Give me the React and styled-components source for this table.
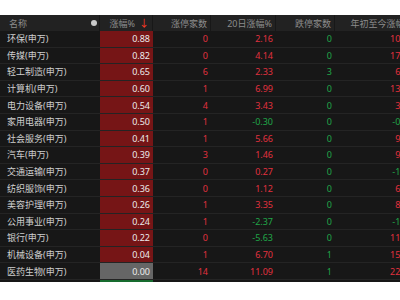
import React from 'react';
import styled, { createGlobalStyle } from 'styled-components';

const GlobalStyle = createGlobalStyle`
  html, body {
    margin: 0;
    padding: 0;
    background: #ffffff;
  }
`;

const COLUMNS = '88px 12px 53px 58px 65px 59px 81px';

const Page = styled.div`
  width: 400px;
  height: 300px;
  padding-top: 15px;
  box-sizing: border-box;
  background: #ffffff;
  font-family: 'Noto Sans', 'Noto Sans CJK SC', sans-serif;
  font-size: 9px;
`;

const Board = styled.div`
  width: 400px;
  height: 267px;
  overflow: hidden;
  background: #171717;
`;

const HeaderRow = styled.div`
  display: grid;
  grid-template-columns: ${COLUMNS};
  height: 16px;
  background: #222222;
`;

const HeadCell = styled.div`
  display: flex;
  align-items: center;
  justify-content: ${(p) => (p.$left ? 'flex-start' : p.$center ? 'center' : 'flex-end')};
  padding: ${(p) => (p.$left ? '0 0 0 9px' : p.$center ? '0' : '0 3px 0 0')};
  border-right: ${(p) => (p.$noLine ? 'none' : '1px solid #181818')};
  color: #8c8c8c;
  white-space: nowrap;
  gap: 4px;
`;

const Dot = styled.span`
  width: 6px;
  height: 6px;
  border-radius: 50%;
  background: #c9c9c9;
`;

const Arrow = styled.span`
  color: #ff3b24;
  font-size: 10px;
  line-height: 1;
`;

const Row = styled.div`
  display: grid;
  grid-template-columns: ${COLUMNS};
  height: 16.6px;
`;

const Cell = styled.div`
  display: flex;
  align-items: center;
  justify-content: ${(p) => (p.$left ? 'flex-start' : 'flex-end')};
  padding: ${(p) => (p.$left ? '0 0 0 7px' : '0 3px 0 0')};
  border-bottom: 1px solid #242424;
  box-sizing: border-box;
  white-space: nowrap;
  color: ${(p) => p.$color || '#cfcfcf'};
  background: ${(p) => p.$bg || 'transparent'};
`;

const RED = '#e2313f';
const GREEN = '#20a648';

const rows = [
  ['环保(申万)', '0.88', '0', '2.16', '0', '10.35'],
  ['传媒(申万)', '0.82', '0', '4.14', '0', '17.82'],
  ['轻工制造(申万)', '0.65', '6', '2.33', '3', '6.41'],
  ['计算机(申万)', '0.60', '1', '6.99', '0', '13.27'],
  ['电力设备(申万)', '0.54', '4', '3.43', '0', '3.58'],
  ['家用电器(申万)', '0.50', '1', '-0.30', '0', '-0.92'],
  ['社会服务(申万)', '0.41', '1', '5.66', '0', '9.14'],
  ['汽车(申万)', '0.39', '3', '1.46', '0', '9.66'],
  ['交通运输(申万)', '0.37', '0', '0.27', '0', '-1.35'],
  ['纺织服饰(申万)', '0.36', '0', '1.12', '0', '6.03'],
  ['美容护理(申万)', '0.26', '1', '3.35', '0', '8.47'],
  ['公用事业(申万)', '0.24', '1', '-2.37', '0', '-1.12'],
  ['银行(申万)', '0.22', '0', '-5.63', '0', '11.86'],
  ['机械设备(申万)', '0.04', '1', '6.70', '1', '15.20'],
  ['医药生物(申万)', '0.00', '14', '11.09', '1', '22.74'],
  ['煤炭(申万)', '-0.05', '0', '-3.21', '0', '-4.10'],
];

const tone = (v) => (v.startsWith('-') ? GREEN : RED);

const changeBg = (v) => {
  const n = parseFloat(v);
  if (n > 0) return '#761516';
  if (n < 0) return '#166b2e';
  return '#666666';
};

const App = () => {
  return (
    <Page>
      <GlobalStyle />
      <Board>
        <HeaderRow>
          <HeadCell $left $noLine>名称</HeadCell>
          <HeadCell $center>
            <Dot />
          </HeadCell>
          <HeadCell>
            涨幅% <Arrow>↓</Arrow>
          </HeadCell>
          <HeadCell>涨停家数</HeadCell>
          <HeadCell>20日涨幅%</HeadCell>
          <HeadCell>跌停家数</HeadCell>
          <HeadCell>年初至今涨幅%</HeadCell>
        </HeaderRow>
        {rows.map(([name, chg, up, d20, down, ytd]) => (
          <Row key={name}>
            <Cell $left>{name}</Cell>
            <Cell />
            <Cell $bg={changeBg(chg)} $color="#ececec">
              {chg}
            </Cell>
            <Cell $color={RED}>{up}</Cell>
            <Cell $color={tone(d20)}>{d20}</Cell>
            <Cell $color={GREEN}>{down}</Cell>
            <Cell $color={tone(ytd)}>{ytd}</Cell>
          </Row>
        ))}
      </Board>
    </Page>
  );
};

export default App;
